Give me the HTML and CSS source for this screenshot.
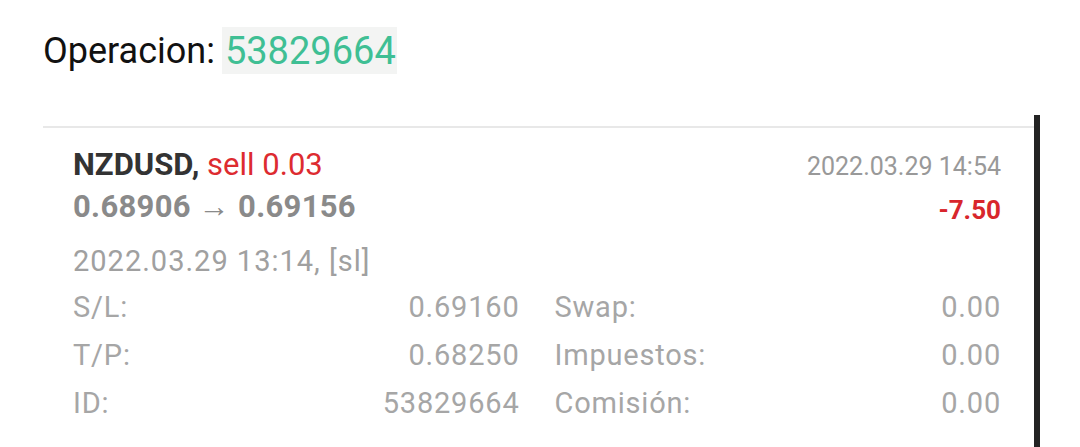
FILE: index.html
```html
<!DOCTYPE html>
<html lang="es">
<head>
    <meta charset="UTF-8">
    <meta name="viewport" content="width=device-width, initial-scale=1.0">
    <title>Operacion 53829664</title>
    <link rel="stylesheet" href="styles.css">
</head>
<body>
    <div class="title">
        <span class="label">Operacion:</span>
        <span class="ticket">53829664</span>
    </div>

    <div class="frame">
        <div class="card">
            <div class="head">
                <div class="left">
                    <div class="symbol">NZDUSD, <span class="red">sell 0.03</span></div>
                    <div class="prices">0.68906 &rarr; 0.69156</div>
                </div>
                <div class="right">
                    <div class="close-time">2022.03.29 14:54</div>
                    <div class="profit">-7.50</div>
                </div>
            </div>

            <div class="open-time">2022.03.29 13:14, [sl]</div>

            <div class="details">
                <div class="row"><span>S/L:</span><span>0.69160</span></div>
                <div class="row"><span>Swap:</span><span>0.00</span></div>
                <div class="row"><span>T/P:</span><span>0.68250</span></div>
                <div class="row"><span>Impuestos:</span><span>0.00</span></div>
                <div class="row"><span>ID:</span><span>53829664</span></div>
                <div class="row"><span>Comisión:</span><span>0.00</span></div>
            </div>
        </div>
        <div class="bar"></div>
    </div>
</body>
</html>
```

FILE: styles.css
```css
body {
    font-family: Roboto, "Noto Sans", sans-serif;
    margin: 0;
    padding: 0;
    background-color: #fff;
    color: #222;
    overflow: hidden;
}

.title {
    padding: 27px 0 0 43px;
    display: flex;
    align-items: center;
    height: 46px;
}

.label {
    font-size: 36px;
    color: #111;
    margin-right: 7px;
    padding-top: 2px;
}

.ticket {
    font-size: 38px;
    color: #3fbf94;
    background-color: #f3f4f3;
    padding: 1px 1px 0 3px;
    line-height: 46px;
}

.frame {
    display: flex;
    margin-top: 42px;
}

.card {
    flex: 1;
    margin-top: 11px;
    border-top: 2px solid #e8e8e8;
    border-bottom: 2px solid #e8e8e8;
    margin-left: 43px;
    padding: 16px 33px 6px 30px;
}

.bar {
    width: 6px;
    background-color: #232323;
    margin-right: 40px;
    height: 340px;
}

.head {
    display: flex;
    justify-content: space-between;
}

.symbol, .prices {
    font-size: 31px;
    font-weight: bold;
    line-height: 42px;
}

.prices {
    letter-spacing: 0.3px;
}

.symbol {
    color: #333;
}

.red {
    font-weight: normal;
    color: #dd2b30;
}

.prices {
    color: #8a8a8a;
}

.right {
    text-align: right;
    padding-top: 1px;
}

.close-time {
    font-size: 25px;
    color: #999;
    line-height: 43px;
}

.profit {
    font-size: 26px;
    font-weight: bold;
    color: #d8262c;
    line-height: 45px;
}

.open-time {
    font-size: 29px;
    letter-spacing: 1px;
    color: #a0a0a0;
    line-height: 48px;
    margin-top: 4px;
}

.details {
    display: grid;
    grid-template-columns: 1fr 1fr;
    column-gap: 35px;
    font-size: 29px;
    letter-spacing: 0.8px;
    color: #a6a6a6;
    line-height: 48px;
    margin-top: -2px;
}

.row {
    display: flex;
    justify-content: space-between;
}
```
